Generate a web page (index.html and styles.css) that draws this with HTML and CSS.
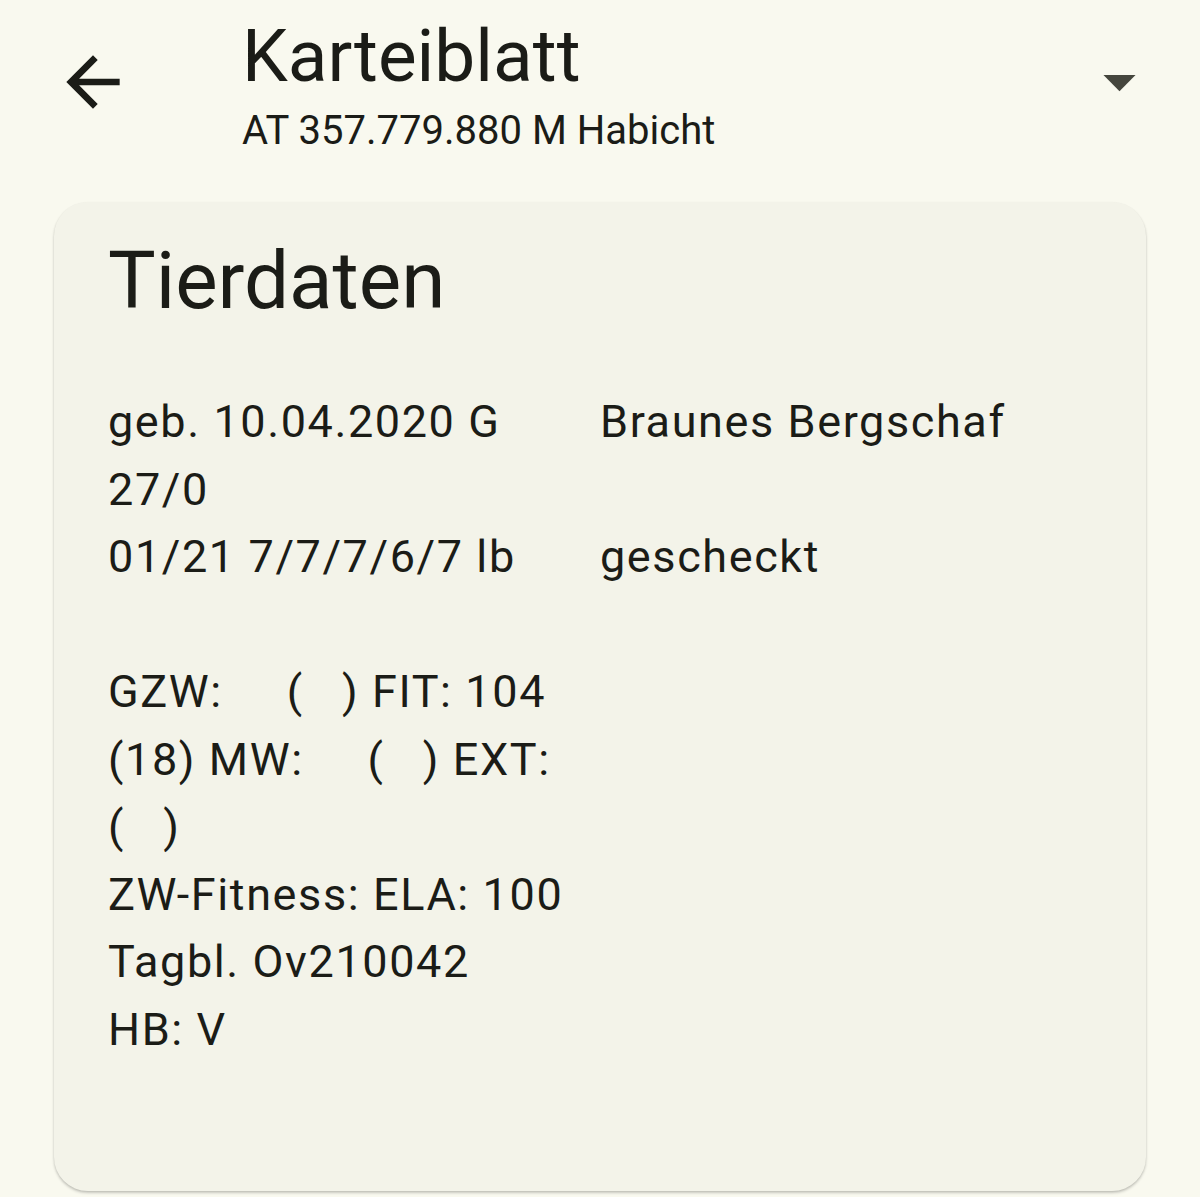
FILE: index.html
```html
<!DOCTYPE html>
<html lang="de">
<head>
    <meta charset="UTF-8">
    <meta name="viewport" content="width=device-width, initial-scale=1.0">
    <title>Karteiblatt</title>
    <link rel="stylesheet" href="styles.css">
</head>
<body>
    <!-- Kopfzeile -->
    <header class="app-bar">
        <button class="icon-btn back-btn" aria-label="Zurück">
            <svg viewBox="0 0 24 24" width="80" height="80"><path d="M20 11H7.83l5.59-5.59L12 4l-8 8 8 8 1.41-1.41L7.83 13H20v-2z"/></svg>
        </button>
        <div class="app-bar-titles">
            <h1 class="title">Karteiblatt</h1>
            <p class="subtitle">AT 357.779.880 M Habicht</p>
        </div>
        <button class="icon-btn menu-btn" aria-label="Menü">
            <svg viewBox="0 0 24 24" width="77" height="77"><path d="M7 10l5 5 5-5z"/></svg>
        </button>
    </header>

    <!-- Karte mit Tierdaten -->
    <main class="card">
        <h2 class="card-title">Tierdaten</h2>

        <div class="data-grid">
            <div class="cell">geb. 10.04.2020 G<br>27/0</div>
            <div class="cell">Braunes Bergschaf</div>
            <div class="cell">01/21 7/7/7/6/7 lb</div>
            <div class="cell">gescheckt</div>
        </div>

        <div class="data-block">
            <div class="line">GZW:     (   ) FIT: 104</div>
            <div class="line">(18) MW:     (   ) EXT:</div>
            <div class="line">(   )</div>
            <div class="line">ZW-Fitness: ELA: 100</div>
            <div class="line">Tagbl. Ov210042</div>
            <div class="line">HB: V</div>
        </div>
    </main>
</body>
</html>
```

FILE: styles.css
```css
/* Grundlayout */
body {
    margin: 0;
    padding: 0 54px 6px;
    background-color: #f9f9ef;
    color: #1b1c17;
    font-family: Roboto, "Noto Sans", Arial, sans-serif;
}

/* Kopfzeile */
.app-bar {
    display: flex;
    align-items: flex-start;
    height: 202px;
}

.icon-btn {
    background: none;
    border: none;
    padding: 0;
    cursor: pointer;
    display: flex;
}

.back-btn {
    margin-top: 42px;
    margin-left: -1px;
}

.back-btn svg {
    fill: #1b1c17;
}

.app-bar-titles {
    flex: 1;
    margin-left: 109px;
    margin-top: 12px;
}

.title {
    margin: 0;
    font-size: 73px;
    font-weight: 400;
    line-height: 88px;
}

.subtitle {
    margin: 3px 0 0;
    font-size: 40px;
    line-height: 56px;
}

.menu-btn {
    margin-top: 43px;
    margin-right: -12px;
}

.menu-btn svg {
    fill: #45463d;
}

/* Karte */
.card {
    background: #f3f3e9;
    border-radius: 34px;
    padding: 29px 54px 0;
    height: 989px;
    box-sizing: border-box;
    box-shadow: 0 2px 3px rgba(0,0,0,0.18), 0 1px 2px rgba(0,0,0,0.08);
}

.card-title {
    margin: 0;
    font-size: 80px;
    font-weight: 400;
    line-height: 100px;
}

.data-grid {
    display: grid;
    grid-template-columns: 1fr 1fr;
    margin-top: 57px;
}

.cell,
.line {
    font-size: 45px;
    line-height: 67.5px;
    letter-spacing: 1.6px;
}

.data-block {
    margin-top: 67.5px;
}

.line {
    white-space: pre;
}
```
